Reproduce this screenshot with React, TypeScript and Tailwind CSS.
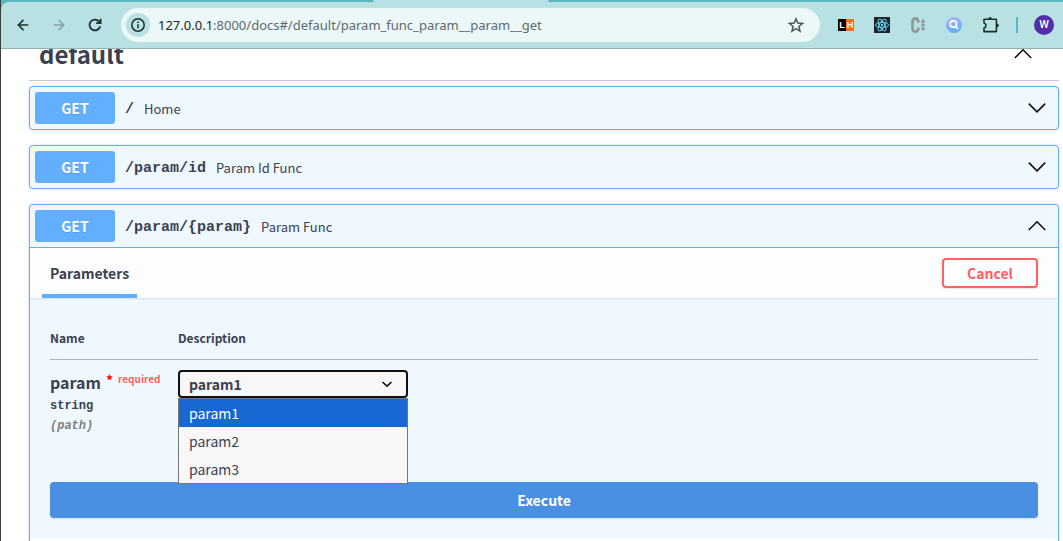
import { useState } from 'react'
import type { ReactNode } from 'react'
import { ArrowLeft, ArrowRight } from 'lucide-react'

const PARAM_OPTIONS = ['param1', 'param2', 'param3']

function Chevron({ up = false }: { up?: boolean }) {
  return (
    <svg
      aria-hidden="true"
      className="h-5 w-5 shrink-0"
      fill="none"
      stroke="#111"
      strokeWidth="1.6"
      viewBox="0 0 20 20"
    >
      <path d={up ? 'M1.8 14 10 5.8 18.2 14' : 'M1.8 5.6 10 13.8 18.2 5.6'} />
    </svg>
  )
}

function Toolbar() {
  return (
    <header className="shrink-0 bg-[#59b7bf]">
      <div className="flex h-0.5 justify-start pl-[372px]">
        <div className="w-[176px] rounded-b-sm bg-[#b8e1e4]" />
      </div>
      <div className="flex h-[47px] items-center rounded-tl-lg border-b border-[#8fb4b7] bg-[#b8e1e4] pl-3.5 pr-[9px]">
        <button aria-label="Back" type="button">
          <ArrowLeft className="h-4 w-4 text-[#1d2f31]" strokeWidth={2.4} />
        </button>
        <button aria-label="Forward" className="ml-5" disabled type="button">
          <ArrowRight className="h-4 w-4 text-[#80a0a3]" strokeWidth={2.2} />
        </button>
        <button aria-label="Reload" className="ml-5" type="button">
          <svg className="h-4 w-4" fill="none" stroke="#1d2f31" strokeWidth="1.8" viewBox="0 0 16 16">
            <path d="M13.2 9.2A5.4 5.4 0 1 1 12 4.4L13.6 6" />
            <path d="M13.6 1.8V6.2H9.2" />
          </svg>
        </button>

        <div className="ml-[18px] flex h-[34px] min-w-0 flex-1 items-center rounded-full bg-[#ebf7f8] pl-[5px] pr-4">
          <button
            aria-label="View site information"
            className="flex h-6 w-6 shrink-0 items-center justify-center rounded-full bg-[#b8e1e4]"
            type="button"
          >
            <svg className="h-4 w-4" fill="none" stroke="#1d2f31" strokeWidth="1.5" viewBox="0 0 16 16">
              <circle cx="8" cy="8" r="6.2" />
              <path d="M8 7.2v4M8 4.6v1.5" />
            </svg>
          </button>
          <p className="ml-2 min-w-0 flex-1 truncate font-['Noto_Sans',sans-serif] text-[13px] leading-5 text-[#5f6b6d]">
            <span className="text-[#1d2527]">127.0.0.1</span>
            :8000/docs#/default/param_func_param__param__get
          </p>
          <button aria-label="Bookmark this tab" type="button">
            <svg className="h-4 w-4" fill="none" stroke="#4a5658" strokeWidth="1.5" viewBox="0 0 16 16">
              <path d="m8 1.8 1.8 4.3 4.7.4-3.6 3 1.1 4.6L8 11.7l-4 2.4 1.1-4.6-3.6-3 4.7-.4z" />
            </svg>
          </button>
        </div>

        <div className="ml-[18px] flex shrink-0 items-center gap-5">
          <button
            aria-label="LH extension"
            className="flex h-3 w-4 font-['Liberation_Sans',sans-serif] text-[9px] font-bold leading-3 text-white"
            type="button"
          >
            <span className="w-2 bg-black">L</span>
            <span className="w-2 bg-[#ff6a13]">H</span>
          </button>
          <button aria-label="React Developer Tools" type="button">
            <svg className="h-4 w-4" fill="none" stroke="#61dafb" strokeWidth="0.9" viewBox="0 0 16 16">
              <rect fill="#20232a" height="16" stroke="none" width="16" />
              <ellipse cx="8" cy="8" rx="6.6" ry="2.6" />
              <ellipse cx="8" cy="8" rx="6.6" ry="2.6" transform="rotate(60 8 8)" />
              <ellipse cx="8" cy="8" rx="6.6" ry="2.6" transform="rotate(120 8 8)" />
              <circle cx="8" cy="8" fill="#61dafb" r="1.2" stroke="none" />
            </svg>
          </button>
          <button aria-label="Console extension" type="button">
            <svg className="h-4 w-4" fill="none" viewBox="0 0 16 16">
              <path
                d="M8.3 5.6V4.4a2.9 2.9 0 0 0-5.8 0v7.2a2.9 2.9 0 0 0 5.8 0v-1.2"
                stroke="#929a9b"
                strokeWidth="2.8"
              />
              <g fill="#929a9b">
                <circle cx="13" cy="4.2" r="1.8" />
                <circle cx="13" cy="8" r="1.8" />
                <circle cx="13" cy="11.8" r="1.8" />
              </g>
            </svg>
          </button>
          <button aria-label="Search extension" type="button">
            <svg className="h-4 w-4" fill="none" viewBox="0 0 16 16">
              <defs>
                <linearGradient id="lens" x1="0" x2="0.3" y1="0" y2="1">
                  <stop stopColor="#b5b4fb" />
                  <stop offset="1" stopColor="#5fb0fb" />
                </linearGradient>
              </defs>
              <circle cx="8" cy="8" fill="url(#lens)" r="8" />
              <circle cx="7.3" cy="7" r="3.2" stroke="#fff" strokeWidth="1.7" />
              <path d="m9.7 9.4 2.4 2.4" stroke="#fff" strokeWidth="1.8" />
            </svg>
          </button>
          <button aria-label="Extensions" type="button">
            <svg className="h-[18px] w-[18px]" viewBox="0 0 18 18">
              <path
                d="M2 3.2h12.4v12.4H2v-3.7c2.7-.9 2.7-4.1 0-5z"
                fill="none"
                stroke="#1d2f31"
                strokeLinejoin="round"
                strokeWidth="1.6"
              />
              <path d="M6.2 2.8a1.9 1.9 0 0 1 3.8 0zM14.9 7.5a1.9 1.9 0 0 1 0 3.8z" fill="#1d2f31" />
            </svg>
          </button>
        </div>
        <span className="ml-4 h-4 w-0.5 bg-[#59b7bf]" />
        <button
          aria-label="Profile"
          className="ml-4 h-5 w-5 shrink-0 rounded-full bg-[#512da8] text-center font-[Roboto,sans-serif] text-[11px] font-medium leading-5 text-white"
          type="button"
        >
          W
        </button>
      </div>
    </header>
  )
}

interface OperationProps {
  path: string
  summary: string
  children?: ReactNode
}

function Operation({ path, summary, children }: OperationProps) {
  const open = Boolean(children)

  return (
    <section className="rounded-sm border border-[#61affe] bg-[#eff7ff] shadow-[0_0_3px_rgba(0,0,0,0.19)]">
      <button
        aria-expanded={open}
        className={`flex w-full items-center p-[5px] pr-[11px] text-left ${
          open ? 'border-b border-[#61affe]' : ''
        }`}
        type="button"
      >
        <span className="w-20 shrink-0 rounded-[3px] bg-[#61affe] text-center text-sm font-bold leading-8 text-white [text-shadow:0_1px_0_rgba(0,0,0,0.1)]">
          GET
        </span>
        <span className="ml-2.5 pt-1 font-['Liberation_Mono',monospace] text-[15px] font-bold leading-5">
          {path}
        </span>
        <span className="ml-2.5 flex-1 pt-0.5 text-[13px] leading-5">{summary}</span>
        <Chevron up={open} />
      </button>
      {children}
    </section>
  )
}

function ParamSelect() {
  const [value, setValue] = useState('param1')

  return (
    <div className="relative w-[230px]">
      <select
        aria-label="param"
        className="block h-7 w-full appearance-none rounded-[4px] border-2 border-[#111] bg-[#f7f7f7] pl-[9px] text-sm font-bold leading-6 outline-none"
        onChange={(event) => setValue(event.target.value)}
        value={value}
      >
        {PARAM_OPTIONS.map((option) => (
          <option key={option}>{option}</option>
        ))}
      </select>
      <svg
        aria-hidden="true"
        className="pointer-events-none absolute right-[15px] top-2 h-3 w-3"
        fill="none"
        stroke="#111"
        strokeWidth="1.6"
        viewBox="0 0 12 12"
      >
        <path d="m1.5 4 4.5 4.2L10.5 4" />
      </svg>
      <ul
        className="absolute inset-x-0 top-full z-10 border border-[#767676] bg-[#f7f7f7] text-sm leading-7"
        role="listbox"
      >
        {PARAM_OPTIONS.map((option) => (
          <li
            key={option}
            aria-selected={option === value}
            className={`pl-2.5 ${option === value ? 'bg-[#1967d2] text-white' : ''}`}
            onClick={() => setValue(option)}
            role="option"
          >
            {option}
          </li>
        ))}
      </ul>
    </div>
  )
}

function Parameters() {
  return (
    <>
      <div className="flex h-[50px] items-center justify-between bg-[#fcfdff] pl-3 pr-5 shadow-[0_1px_2px_rgba(0,0,0,0.1)]">
        <h4 className="h-full border-b-4 border-[#61affe] px-2 pt-[15px] text-sm font-bold leading-5">
          Parameters
        </h4>
        <button
          className="h-[30px] w-24 rounded-[4px] border-2 border-[#ff6060] text-sm font-bold leading-[26px] text-[#ff6060] shadow-[0_1px_2px_rgba(0,0,0,0.1)]"
          type="button"
        >
          Cancel
        </button>
      </div>

      <div className="p-5">
        <table className="w-full text-left">
          <thead>
            <tr className="h-[41px] border-b border-[#a9b3c1] text-xs font-bold">
              <th className="w-32">Name</th>
              <th>Description</th>
            </tr>
          </thead>
          <tbody>
            <tr className="h-[123px] align-top">
              <td className="pt-2.5">
                <div className="flex items-start">
                  <span className="text-base font-bold leading-6">param</span>
                  <span className="ml-[5px] text-sm font-bold leading-5 text-[#f00]">*</span>
                  <span className="ml-[5px] text-[10px] font-bold leading-[18px] text-[#ff6060]">required</span>
                </div>
                <div className="pt-0.5 font-['Liberation_Mono',monospace] text-xs font-bold leading-5">
                  string
                </div>
                <div className="font-['Liberation_Mono',monospace] text-xs font-bold italic leading-5 text-[#808080]">
                  (path)
                </div>
              </td>
              <td className="pt-2.5">
                <ParamSelect />
              </td>
            </tr>
          </tbody>
        </table>

        <button
          className="h-9 w-full rounded-[4px] bg-[#4990e2] text-sm font-bold leading-9 text-white shadow-[0_1px_2px_rgba(0,0,0,0.1)]"
          type="button"
        >
          Execute
        </button>
      </div>
      <div className="h-12 bg-[#fcfdff]" />
    </>
  )
}

export default function App() {
  return (
    <div className="flex h-screen flex-col overflow-hidden border-l border-[#3d3d3f] bg-white font-['Noto_Sans_CJK_KR',sans-serif] text-[#3b4151]">
      <Toolbar />
      <main className="min-h-0 flex-1 overflow-hidden pl-7 pr-1">
        <div className="-mt-[21px] flex h-[53px] items-center justify-between border-b border-[#c4c6cb] pl-2.5 pr-[26px]">
          <h3 className="text-2xl font-bold">default</h3>
          <Chevron up />
        </div>
        <div className="mt-[5px] flex flex-col gap-[15px]">
          <Operation path="/" summary="Home" />
          <Operation path="/param/id" summary="Param Id Func" />
          <Operation path="/param/{param}" summary="Param Func">
            <Parameters />
          </Operation>
        </div>
      </main>
    </div>
  )
}
